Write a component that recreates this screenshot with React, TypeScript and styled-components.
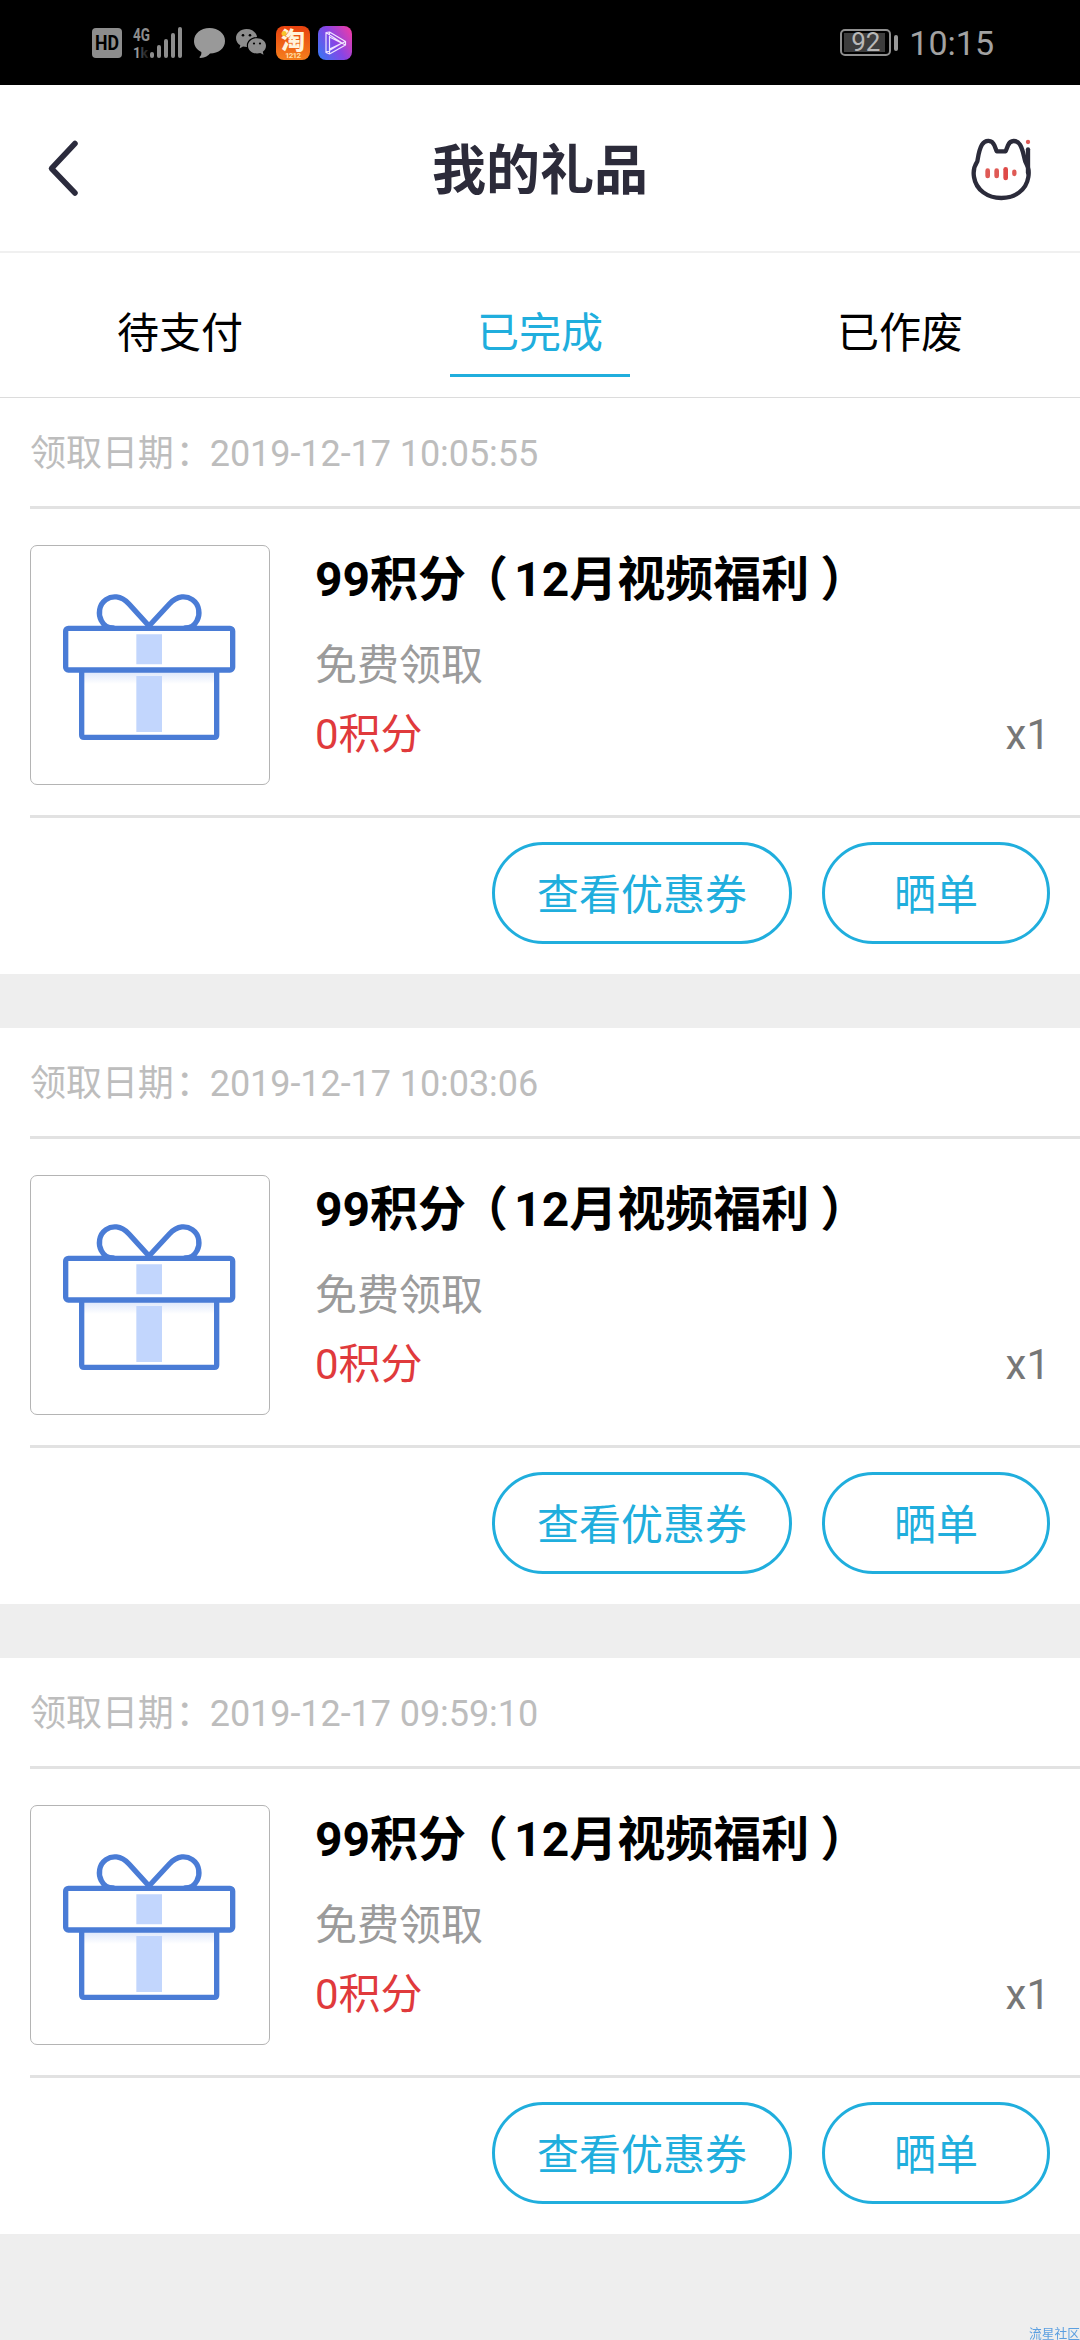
import React from 'react';
import styled, { createGlobalStyle } from 'styled-components';

const BLUE = '#20aedd';
const LINE = '#e2e2e2';

const GlobalStyle = createGlobalStyle`
  * { box-sizing: border-box; }
  body {
    margin: 0;
    background: #eeeeee;
    font-family: Roboto, "Noto Sans CJK SC", sans-serif;
    color: #000;
  }
`;

const Page = styled.div`
  display: flex;
  flex-direction: column;
  width: 1080px;
  height: 2340px;
  overflow: hidden;
  background: #eeeeee;
`;

const StatusBar = styled.div`
  display: flex;
  align-items: center;
  justify-content: space-between;
  flex: none;
  height: 85px;
  padding: 0 86px 0 92px;
  background: #000;
`;

const StatusGroup = styled.div`
  display: flex;
  align-items: center;
`;

const Glyph = styled.svg<{ $gap?: number }>`
  display: block;
  flex: none;
  overflow: visible;
  margin-right: ${(p) => p.$gap ?? 0}px;
`;

const Battery = styled.div`
  display: flex;
  align-items: center;
  gap: 3px;
  margin-right: 11px;
`;

const BatteryCell = styled.div`
  width: 51px;
  height: 27px;
  padding: 2px;
  border: 2px solid #8f8f8f;
  border-radius: 5px;
`;

const BatteryLevel = styled.div`
  width: 41px;
  height: 19px;
  padding-left: 2px;
  background: #3d3d3d;
  color: #b8b8b8;
  font-size: 26px;
  line-height: 19px;
  text-align: center;
`;

const BatteryNub = styled.div`
  width: 4px;
  height: 16px;
  border-radius: 2px;
  background: #999;
`;

const Clock = styled.div`
  color: #a2a2a2;
  font-size: 34px;
  line-height: 40px;
  margin-top: 1px;
`;

const Header = styled.header`
  display: grid;
  grid-template-columns: 140px 1fr 140px;
  align-items: center;
  flex: none;
  height: 168px;
  border-bottom: 2px solid #f0f0f0;
  background: #fff;
`;

const BackButton = styled.button`
  display: flex;
  padding: 0 0 0 46px;
  border: 0;
  background: none;
`;

const MascotButton = styled(BackButton)`
  padding: 4px 0 0 28px;
`;

const PageTitle = styled.h1`
  margin: 0;
  padding-top: 8px;
  color: #2c2b3a;
  font-size: 54px;
  line-height: 80px;
  font-weight: 700;
  text-align: center;
`;

const Tabs = styled.nav`
  display: grid;
  grid-template-columns: repeat(3, 1fr);
  flex: none;
  justify-items: center;
  height: 145px;
  padding-top: 40px;
  border-bottom: 1px solid #dcdcdc;
  background: #fff;
`;

const Tab = styled.button<{ $active?: boolean }>`
  width: 180px;
  height: 84px;
  padding: 0;
  border: 0;
  border-bottom: 3px solid ${(p) => (p.$active ? BLUE : 'transparent')};
  background: none;
  color: ${(p) => (p.$active ? BLUE : '#000')};
  font-family: inherit;
  font-size: 42px;
  line-height: 60px;
`;

const List = styled.main`
  display: flex;
  flex-direction: column;
  gap: 54px;
`;

const Card = styled.article`
  display: flex;
  flex-direction: column;
  height: 576px;
  padding-left: 30px;
  background: #fff;
`;

const DateRow = styled.div`
  height: 111px;
  border-bottom: 3px solid ${LINE};
  color: #bdbdbd;
  font-size: 36px;
  line-height: 112px;
  letter-spacing: -0.06px;
`;

const Punct = styled.span<{ $shift: number }>`
  display: inline-block;
  transform: translateX(${(p) => p.$shift}px);
`;

const Body = styled.div`
  display: flex;
  height: 309px;
  padding: 36px 30px 30px 0;
  border-bottom: 3px solid ${LINE};
`;

const Thumb = styled.div`
  flex: none;
  width: 240px;
  height: 240px;
  margin-right: 45px;
  border: 1px solid #b4b4b4;
  border-radius: 7px;
`;

const Info = styled.div`
  display: flex;
  flex: 1;
  flex-direction: column;
`;

const ItemTitle = styled.h2`
  margin: 0;
  font-size: 48px;
  line-height: 70px;
  font-weight: 700;
  white-space: nowrap;
`;

const Note = styled.div`
  margin: 16px 0 -1px;
  color: #9b9b9b;
  font-size: 42px;
  line-height: 70px;
`;

const PriceRow = styled.div`
  display: flex;
  justify-content: space-between;
  font-size: 42px;
  line-height: 70px;
`;

const Price = styled.span`
  color: #e03a3c;
`;

const Count = styled.span`
  color: #777;
`;

const Actions = styled.div`
  display: flex;
  justify-content: flex-end;
  gap: 30px;
  padding: 24px 30px 30px 0;
`;

const Pill = styled.button<{ $width: number }>`
  width: ${(p) => p.$width}px;
  height: 102px;
  padding: 6px 0 0;
  border: 3px solid ${BLUE};
  border-radius: 51px;
  background: #fff;
  color: ${BLUE};
  font-family: inherit;
  font-size: 42px;
  line-height: 60px;
`;

const Watermark = styled.div`
  position: fixed;
  right: 0;
  bottom: -3px;
  color: #5b9fe0;
  font-size: 12.75px;
  line-height: 19px;
  white-space: nowrap;
`;

const Gift = () => (
  <Glyph width="238" height="238" viewBox="34 48 714 714" fill="none" stroke="#4a7cd6" strokeWidth="16" strokeLinejoin="round" strokeLinecap="round">
    <defs>
      <linearGradient id="lid" x1="0" y1="0" x2="0" y2="1">
        <stop offset="0" stopColor="#dfe8fb" />
        <stop offset="1" stopColor="#ffffff" />
      </linearGradient>
    </defs>
    <rect x="192" y="426" width="394" height="36" fill="url(#lid)" stroke="none" />
    <path d="M350 313h77v90h-77zM350 438h77v168h-77z" fill="#c2d6fd" stroke="none" />
    <rect x="138" y="295" width="501" height="125" rx="8" />
    <path d="M186 422v193q0 7 7 7h391q7 0 7-7V422" />
    <path d="M388 288L328 222C303 195 276 197 259 209C237 224 235 254 245 272C253 288 264 294 280 294M388 288L449 222C474 195 501 197 518 209C540 224 542 254 532 272C524 288 513 294 497 294" />
  </Glyph>
);

const Mascot = () => (
  <Glyph width="68" height="68" viewBox="84 80 204 204" fill="none" strokeLinecap="round" strokeLinejoin="round">
    <path d="M170 126L163 108C156 91 136 90 126 106C117 121 115 139 112 156C102 171 99 186 102 203C108 242 143 266 184 266C225 266 259 242 265 203C268 185 265 171 256 157C251 139 249 121 240 106C230 91 211 91 204 108L197 126Z" stroke="#2b2b3a" strokeWidth="13" />
    <path d="M264 120V190" stroke="#2b2b3a" strokeWidth="13" />
    <circle cx="264" cy="98" r="6.5" fill="#df5a55" />
    <path d="M143 184v16M170 184v16" stroke="#df5a55" strokeWidth="14" />
    <path d="M197 180v26" stroke="#df4a48" strokeWidth="14" />
    <path d="M223 187v7" stroke="#df5a55" strokeWidth="13" />
  </Glyph>
);

const HdIcon = () => (
  <Glyph $gap={11} width="30" height="30" viewBox="0 0 30 30">
    <rect width="30" height="30" rx="4" fill="#8d8d8d" />
    <text x="3" y="22" fontFamily="Roboto" fontSize="20" fontWeight="700" fill="#000" textLength="24" lengthAdjust="spacingAndGlyphs">HD</text>
  </Glyph>
);

const SignalIcon = () => (
  <Glyph $gap={11} width="50" height="32" viewBox="0 0 50 32" fill="#8d8d8d">
    <defs>
      <linearGradient id="fade" x1="0" x2="1">
        <stop offset="0.35" stopColor="#999" />
        <stop offset="0.65" stopColor="#2a2a2a" />
      </linearGradient>
    </defs>
    <text x="0" y="14" fontFamily="Roboto" fontSize="19" fontWeight="700" textLength="17" lengthAdjust="spacingAndGlyphs">4G</text>
    <text x="0" y="31" fontFamily="Roboto" fontSize="15" fontWeight="700" fill="url(#fade)" textLength="15" lengthAdjust="spacingAndGlyphs">1k</text>
    <rect x="17" y="25" width="4" height="6" rx="2" />
    <rect x="24" y="18" width="4" height="13" rx="2" />
    <rect x="31" y="12" width="4" height="19" rx="2" />
    <rect x="38" y="6" width="4" height="25" rx="2" />
    <rect x="45" y="0" width="4" height="31" rx="2" />
  </Glyph>
);

const BubbleIcon = () => (
  <Glyph $gap={11} width="31" height="30" viewBox="0 0 31 30">
    <path d="M15.500 0C24.500 0 31 5.600 31 13C31 20.500 24.500 25.500 16 25.500C14.500 27.600 11 29.800 6.500 30C5.300 30 5.200 29.200 6 28.500C7.300 27.200 7.500 25.700 7.300 24C2.700 21.800 0 17.800 0 13C0 5.600 6.500 0 15.500 0Z" fill="#999" />
  </Glyph>
);

const WeChatIcon = () => (
  <Glyph $gap={10} width="30" height="27" viewBox="0 0 30 27" fill="#8d8d8d">
    <path d="M10.500 0C16 0 20.500 3.400 21 8C15 8.300 10.800 12 10.800 16.500L11 18C9.500 18 8.300 17.800 7 17.500L3.500 19.500L4.300 16.300C1.600 14.700 0 12 0 9C0 4 4.700 0 10.500 0Z" />
    <path d="M21 9.300C26 9.300 30 12.600 30 16.800C30 19.300 28.800 21.400 26.800 22.700L27.500 25.700L24.300 24C23.300 24.300 22.200 24.500 21 24.500C16 24.500 12 21.100 12 16.900C12 12.600 16 9.300 21 9.300Z" />
    <g fill="#000">
      <circle cx="7" cy="6.300" r="1.300" />
      <circle cx="14" cy="6.300" r="1.300" />
      <circle cx="18" cy="14.500" r="1.100" />
      <circle cx="24" cy="14.500" r="1.100" />
    </g>
  </Glyph>
);

const TaobaoIcon = () => (
  <Glyph $gap={8} width="34" height="34" viewBox="0 0 34 34">
    <defs>
      <linearGradient id="tb" x1="0" y1="0" x2="0" y2="1">
        <stop offset="0" stopColor="#e8420f" />
        <stop offset="1" stopColor="#f57f1d" />
      </linearGradient>
    </defs>
    <rect width="34" height="34" rx="8" fill="url(#tb)" />
    <text x="5" y="23" fontFamily="Noto Sans CJK SC" fontSize="24" fontWeight="900" fill="#fff3dc">淘</text>
    <circle cx="8" cy="7.500" r="2.500" fill="#f7c52c" />
    <text x="9" y="32" fontFamily="Roboto" fontSize="8" fontWeight="700" fill="#ffdfa5" textLength="16">1212</text>
  </Glyph>
);

const PlayIcon = () => (
  <Glyph width="34" height="34" viewBox="0 0 34 34" fill="none">
    <defs>
      <linearGradient id="pl" x1="0" y1="0.8" x2="1" y2="0.2">
        <stop offset="0" stopColor="#3f73f2" />
        <stop offset="0.5" stopColor="#8745e6" />
        <stop offset="1" stopColor="#e83caa" />
      </linearGradient>
    </defs>
    <rect width="34" height="34" rx="8" fill="url(#pl)" />
    <path d="M8 6.500L11.500 6L27.500 15.500V19L11.500 28L8 26.500ZM11.500 6V28M8 6.500L24 17L8 26.500M11.500 11L27.500 19M11.500 23L27.500 15.500" stroke="#efe3ff" strokeWidth="1.200" strokeLinejoin="round" />
  </Glyph>
);

const gifts = ['2019-12-17 10:05:55', '2019-12-17 10:03:06', '2019-12-17 09:59:10'];

const GiftCard = ({ date }: { date: string }) => (
  <Card>
    <DateRow>
      领取日期<Punct $shift={2}>：</Punct>
      {date}
    </DateRow>
    <Body>
      <Thumb>
        <Gift />
      </Thumb>
      <Info>
        <ItemTitle>
          99积分<Punct $shift={-6}>（</Punct>12月视频福利<Punct $shift={11}>）</Punct>
        </ItemTitle>
        <Note>免费领取</Note>
        <PriceRow>
          <Price>0积分</Price>
          <Count>x1</Count>
        </PriceRow>
      </Info>
    </Body>
    <Actions>
      <Pill $width={300}>查看优惠券</Pill>
      <Pill $width={228}>晒单</Pill>
    </Actions>
  </Card>
);

export default function App() {
  return (
    <Page>
      <GlobalStyle />
      <StatusBar>
        <StatusGroup>
          <HdIcon />
          <SignalIcon />
          <BubbleIcon />
          <WeChatIcon />
          <TaobaoIcon />
          <PlayIcon />
        </StatusGroup>
        <StatusGroup>
          <Battery>
            <BatteryCell>
              <BatteryLevel>92</BatteryLevel>
            </BatteryCell>
            <BatteryNub />
          </Battery>
          <Clock>10:15</Clock>
        </StatusGroup>
      </StatusBar>
      <Header>
        <BackButton aria-label="返回">
          <Glyph width="34" height="58" viewBox="0 0 34 58" fill="none" stroke="#2b2b3d" strokeWidth="5.500" strokeLinecap="round" strokeLinejoin="round">
            <path d="M29 4.500L5.500 29.500L29 54" />
          </Glyph>
        </BackButton>
        <PageTitle>我的礼品</PageTitle>
        <MascotButton aria-label="客服">
          <Mascot />
        </MascotButton>
      </Header>
      <Tabs>
        <Tab>待支付</Tab>
        <Tab $active>已完成</Tab>
        <Tab>已作废</Tab>
      </Tabs>
      <List>
        {gifts.map((date) => (
          <GiftCard key={date} date={date} />
        ))}
      </List>
      <Watermark>流星社区</Watermark>
    </Page>
  );
}
